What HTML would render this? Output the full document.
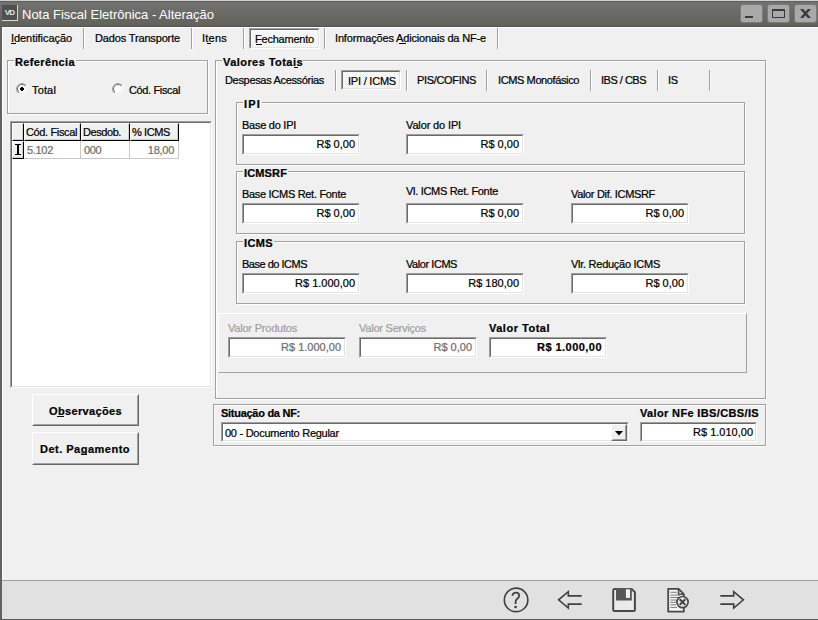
<!DOCTYPE html><html><head><meta charset="utf-8"><style>body{margin:0;width:818px;height:620px;overflow:hidden;background:#f0f0f0;position:relative;font-family:'Liberation Sans', sans-serif}u{text-decoration:none;border-bottom:1px solid currentColor;}</style></head><body>
<div style="position:absolute;left:0px;top:0px;width:818px;height:1px;background:#cfcfcf"></div>
<div style="position:absolute;left:0px;top:1px;width:818px;height:1px;background:#5e5e5c"></div>
<div style="position:absolute;left:0px;top:2px;width:818px;height:24px;background:linear-gradient(#72726e,#62625d)"></div>
<div style="position:absolute;left:0px;top:26px;width:818px;height:1px;background:#55554f"></div>
<div style="position:absolute;left:0px;top:27px;width:2px;height:593px;background:#626262"></div>
<div style="position:absolute;left:2px;top:27px;width:816px;height:1px;background:#fff"></div>
<div style="position:absolute;left:2px;top:27px;width:1px;height:553px;background:#fff"></div>
<div style="position:absolute;left:2px;top:580px;width:816px;height:1px;background:#a0a0a0"></div>
<div style="position:absolute;left:2px;top:581px;width:816px;height:38px;background:#e1e1e1"></div>
<div style="position:absolute;left:0px;top:619px;width:818px;height:1px;background:#5a5a5a"></div>
<div style="position:absolute;left:2px;top:5px;width:15px;height:15px;background:#505050"></div>
<div style="position:absolute;left:17px;top:5px;width:1px;height:16px;background:#d8d8d8"></div>
<div style="position:absolute;left:2px;top:20px;width:16px;height:1px;background:#d8d8d8"></div>
<div style="position:absolute;left:2px;top:8px;width:15px;text-align:center;font:bold 8px 'Liberation Sans';line-height:9px;color:#e8e8e8;letter-spacing:-0.8px">VD</div>
<div style="position:absolute;left:740px;top:4px;width:23px;height:19px;background:#a9a9a9;border:1px solid #7c7c78;border-radius:3px;box-sizing:border-box"></div>
<div style="position:absolute;left:767px;top:4px;width:23px;height:19px;background:#a9a9a9;border:1px solid #7c7c78;border-radius:3px;box-sizing:border-box"></div>
<div style="position:absolute;left:794px;top:4px;width:23px;height:19px;background:#a9a9a9;border:1px solid #7c7c78;border-radius:3px;box-sizing:border-box"></div>
<div style="position:absolute;left:745px;top:16px;width:8px;height:2px;background:#3a3a3a"></div>
<div style="position:absolute;left:772px;top:9px;width:13px;height:9px;border:1px solid #3a3a3a;border-top-width:2px;box-sizing:border-box"></div>
<svg style="position:absolute;left:799px;top:8px" width="13" height="11" viewBox="0 0 13 11"><path d="M1 1H4.2L12 10H8.8Z M8.8 1H12L4.2 10H1Z" fill="#3a3a3a"/></svg>
<div style="position:absolute;left:83px;top:28px;width:1px;height:21px;background:#a0a0a0"></div>
<div style="position:absolute;left:84px;top:28px;width:1px;height:21px;background:#fff"></div>
<div style="position:absolute;left:191px;top:28px;width:1px;height:21px;background:#a0a0a0"></div>
<div style="position:absolute;left:192px;top:28px;width:1px;height:21px;background:#fff"></div>
<div style="position:absolute;left:243px;top:28px;width:1px;height:21px;background:#a0a0a0"></div>
<div style="position:absolute;left:244px;top:28px;width:1px;height:21px;background:#fff"></div>
<div style="position:absolute;left:324px;top:28px;width:1px;height:21px;background:#a0a0a0"></div>
<div style="position:absolute;left:325px;top:28px;width:1px;height:21px;background:#fff"></div>
<div style="position:absolute;left:497px;top:28px;width:1px;height:21px;background:#a0a0a0"></div>
<div style="position:absolute;left:498px;top:28px;width:1px;height:21px;background:#fff"></div>
<div style="position:absolute;left:249px;top:28px;width:71px;height:21px;background:repeating-conic-gradient(#fff 0 25%,#f0f0f0 0 50%) 0 0/2px 2px;border-style:solid;border-width:1px;border-color:#a0a0a0 #fff #fff #a0a0a0;box-sizing:border-box"></div>
<div style="position:absolute;left:250px;top:29px;width:69px;height:19px;border-style:solid;border-width:1px;border-color:#696969 #e3e3e3 #e3e3e3 #696969;box-sizing:border-box"></div>
<div style="position:absolute;left:11px;top:43px;width:5px;height:1px;background:#000"></div>
<div style="position:absolute;left:207px;top:43px;width:4px;height:1px;background:#000"></div>
<div style="position:absolute;left:256px;top:44px;width:6px;height:1px;background:#000"></div>
<div style="position:absolute;left:399px;top:43px;width:7px;height:1px;background:#000"></div>
<div style="position:absolute;left:8px;top:61px;width:201px;height:54px;border:1px solid #fff;box-sizing:border-box"></div>
<div style="position:absolute;left:7px;top:60px;width:201px;height:54px;border:1px solid #a0a0a0;box-sizing:border-box"></div>
<div style="position:absolute;left:14px;top:56px;width:62px;height:10px;background:#f0f0f0"></div>
<svg style="position:absolute;left:16px;top:83px" width="12" height="12" viewBox="0 0 12 12">
<defs><linearGradient id="g1" x1="0" y1="0" x2="1" y2="1"><stop offset="0.5" stop-color="#a0a0a0"/><stop offset="0.5" stop-color="#fff"/></linearGradient>
<linearGradient id="g2" x1="0" y1="0" x2="1" y2="1"><stop offset="0.5" stop-color="#696969"/><stop offset="0.5" stop-color="#e3e3e3"/></linearGradient></defs>
<circle cx="6" cy="6" r="5.5" fill="none" stroke="url(#g1)" stroke-width="1"/>
<circle cx="6" cy="6" r="4.5" fill="#fff" stroke="url(#g2)" stroke-width="1"/>
<rect x="4" y="5" width="4" height="2" fill="#000"/><rect x="5" y="4" width="2" height="4" fill="#000"/>
</svg>
<svg style="position:absolute;left:112px;top:83px" width="12" height="12" viewBox="0 0 12 12">
<circle cx="6" cy="6" r="5.5" fill="none" stroke="url(#g1)" stroke-width="1"/>
<circle cx="6" cy="6" r="4.5" fill="#fff" stroke="url(#g2)" stroke-width="1"/>
</svg>
<div style="position:absolute;left:10px;top:121px;width:202px;height:267px;background:#fff;border-style:solid;border-width:1px;border-color:#a0a0a0 #fff #fff #a0a0a0;box-sizing:border-box"></div>
<div style="position:absolute;left:11px;top:122px;width:200px;height:265px;border-style:solid;border-width:1px;border-color:#696969 #e3e3e3 #e3e3e3 #696969;box-sizing:border-box"></div>
<div style="position:absolute;left:12px;top:123px;width:12px;height:18px;background:#f0f0f0;border-style:solid;border-width:1px;border-color:#fff #000 #000 #fff;box-sizing:border-box"></div>
<div style="position:absolute;left:13px;top:124px;width:10px;height:16px;border-right:1px solid #cfcfcf;border-bottom:1px solid #cfcfcf;box-sizing:border-box"></div>
<div style="position:absolute;left:24px;top:123px;width:57px;height:18px;background:#f0f0f0;border-style:solid;border-width:1px;border-color:#fff #000 #000 #fff;box-sizing:border-box"></div>
<div style="position:absolute;left:25px;top:124px;width:55px;height:16px;border-right:1px solid #cfcfcf;border-bottom:1px solid #cfcfcf;box-sizing:border-box"></div>
<div style="position:absolute;left:81px;top:123px;width:49px;height:18px;background:#f0f0f0;border-style:solid;border-width:1px;border-color:#fff #000 #000 #fff;box-sizing:border-box"></div>
<div style="position:absolute;left:82px;top:124px;width:47px;height:16px;border-right:1px solid #cfcfcf;border-bottom:1px solid #cfcfcf;box-sizing:border-box"></div>
<div style="position:absolute;left:130px;top:123px;width:49px;height:18px;background:#f0f0f0;border-style:solid;border-width:1px;border-color:#fff #000 #000 #fff;box-sizing:border-box"></div>
<div style="position:absolute;left:131px;top:124px;width:47px;height:16px;border-right:1px solid #cfcfcf;border-bottom:1px solid #cfcfcf;box-sizing:border-box"></div>
<div style="position:absolute;left:24px;top:141px;width:57px;height:18px;border-right:1px solid #c8c8c8;border-bottom:1px solid #c8c8c8;box-sizing:border-box"></div>
<div style="position:absolute;left:81px;top:141px;width:49px;height:18px;border-right:1px solid #c8c8c8;border-bottom:1px solid #c8c8c8;box-sizing:border-box"></div>
<div style="position:absolute;left:130px;top:141px;width:49px;height:18px;border-right:1px solid #c8c8c8;border-bottom:1px solid #c8c8c8;box-sizing:border-box"></div>
<div style="position:absolute;left:12px;top:141px;width:12px;height:18px;background:#f0f0f0;border-style:solid;border-width:1px;border-color:#fff #000 #000 #fff;box-sizing:border-box"></div>
<div style="position:absolute;left:13px;top:142px;width:10px;height:16px;border-right:1px solid #cfcfcf;border-bottom:1px solid #cfcfcf;box-sizing:border-box"></div>
<div style="position:absolute;left:15px;top:144px;width:6px;height:1px;background:#000"></div>
<div style="position:absolute;left:15px;top:154px;width:6px;height:1px;background:#000"></div>
<div style="position:absolute;left:17px;top:145px;width:2px;height:9px;background:#000"></div>
<div style="position:absolute;left:32px;top:394px;width:107px;height:32px;background:#f0f0f0;border-style:solid;border-width:1px;border-color:#fff #696969 #696969 #fff;box-sizing:border-box"></div>
<div style="position:absolute;left:33px;top:395px;width:105px;height:30px;border-style:solid;border-width:1px;border-color:#f0f0f0 #a0a0a0 #a0a0a0 #f0f0f0;box-sizing:border-box"></div>
<div style="position:absolute;left:57px;top:416px;width:7px;height:1px;background:#000"></div>
<div style="position:absolute;left:32px;top:432px;width:107px;height:33px;background:#f0f0f0;border-style:solid;border-width:1px;border-color:#fff #696969 #696969 #fff;box-sizing:border-box"></div>
<div style="position:absolute;left:33px;top:433px;width:105px;height:31px;border-style:solid;border-width:1px;border-color:#f0f0f0 #a0a0a0 #a0a0a0 #f0f0f0;box-sizing:border-box"></div>
<div style="position:absolute;left:81px;top:454px;width:6px;height:1px;background:#000"></div>
<div style="position:absolute;left:216px;top:61px;width:551px;height:339px;border:1px solid #fff;box-sizing:border-box"></div>
<div style="position:absolute;left:215px;top:60px;width:551px;height:339px;border:1px solid #a0a0a0;box-sizing:border-box"></div>
<div style="position:absolute;left:222px;top:56px;width:81px;height:10px;background:#f0f0f0"></div>
<div style="position:absolute;left:294px;top:67px;width:4px;height:1px;background:#000"></div>
<div style="position:absolute;left:335px;top:70px;width:1px;height:21px;background:#a0a0a0"></div>
<div style="position:absolute;left:336px;top:70px;width:1px;height:21px;background:#fff"></div>
<div style="position:absolute;left:406px;top:70px;width:1px;height:21px;background:#a0a0a0"></div>
<div style="position:absolute;left:407px;top:70px;width:1px;height:21px;background:#fff"></div>
<div style="position:absolute;left:486px;top:70px;width:1px;height:21px;background:#a0a0a0"></div>
<div style="position:absolute;left:487px;top:70px;width:1px;height:21px;background:#fff"></div>
<div style="position:absolute;left:590px;top:70px;width:1px;height:21px;background:#a0a0a0"></div>
<div style="position:absolute;left:591px;top:70px;width:1px;height:21px;background:#fff"></div>
<div style="position:absolute;left:657px;top:70px;width:1px;height:21px;background:#a0a0a0"></div>
<div style="position:absolute;left:658px;top:70px;width:1px;height:21px;background:#fff"></div>
<div style="position:absolute;left:709px;top:70px;width:1px;height:21px;background:#a0a0a0"></div>
<div style="position:absolute;left:710px;top:70px;width:1px;height:21px;background:#fff"></div>
<div style="position:absolute;left:341px;top:70px;width:60px;height:20px;background:repeating-conic-gradient(#fff 0 25%,#f0f0f0 0 50%) 0 0/2px 2px;border-style:solid;border-width:1px;border-color:#a0a0a0 #fff #fff #a0a0a0;box-sizing:border-box"></div>
<div style="position:absolute;left:342px;top:71px;width:58px;height:18px;border-style:solid;border-width:1px;border-color:#696969 #e3e3e3 #e3e3e3 #696969;box-sizing:border-box"></div>
<div style="position:absolute;left:237px;top:103px;width:509px;height:63px;border:1px solid #fff;box-sizing:border-box"></div>
<div style="position:absolute;left:236px;top:102px;width:509px;height:63px;border:1px solid #a0a0a0;box-sizing:border-box"></div>
<div style="position:absolute;left:243px;top:98px;width:19px;height:10px;background:#f0f0f0"></div>
<div style="position:absolute;left:242px;top:134px;width:118px;height:21px;background:#fff;border-style:solid;border-width:1px;border-color:#a0a0a0 #fff #fff #a0a0a0;box-sizing:border-box"></div>
<div style="position:absolute;left:243px;top:135px;width:116px;height:19px;border-style:solid;border-width:1px;border-color:#696969 #e3e3e3 #e3e3e3 #696969;box-sizing:border-box"></div>
<div style="position:absolute;left:406px;top:134px;width:118px;height:21px;background:#fff;border-style:solid;border-width:1px;border-color:#a0a0a0 #fff #fff #a0a0a0;box-sizing:border-box"></div>
<div style="position:absolute;left:407px;top:135px;width:116px;height:19px;border-style:solid;border-width:1px;border-color:#696969 #e3e3e3 #e3e3e3 #696969;box-sizing:border-box"></div>
<div style="position:absolute;left:237px;top:172px;width:509px;height:63px;border:1px solid #fff;box-sizing:border-box"></div>
<div style="position:absolute;left:236px;top:171px;width:509px;height:63px;border:1px solid #a0a0a0;box-sizing:border-box"></div>
<div style="position:absolute;left:243px;top:167px;width:45px;height:10px;background:#f0f0f0"></div>
<div style="position:absolute;left:242px;top:203px;width:118px;height:21px;background:#fff;border-style:solid;border-width:1px;border-color:#a0a0a0 #fff #fff #a0a0a0;box-sizing:border-box"></div>
<div style="position:absolute;left:243px;top:204px;width:116px;height:19px;border-style:solid;border-width:1px;border-color:#696969 #e3e3e3 #e3e3e3 #696969;box-sizing:border-box"></div>
<div style="position:absolute;left:406px;top:203px;width:118px;height:21px;background:#fff;border-style:solid;border-width:1px;border-color:#a0a0a0 #fff #fff #a0a0a0;box-sizing:border-box"></div>
<div style="position:absolute;left:407px;top:204px;width:116px;height:19px;border-style:solid;border-width:1px;border-color:#696969 #e3e3e3 #e3e3e3 #696969;box-sizing:border-box"></div>
<div style="position:absolute;left:571px;top:203px;width:118px;height:21px;background:#fff;border-style:solid;border-width:1px;border-color:#a0a0a0 #fff #fff #a0a0a0;box-sizing:border-box"></div>
<div style="position:absolute;left:572px;top:204px;width:116px;height:19px;border-style:solid;border-width:1px;border-color:#696969 #e3e3e3 #e3e3e3 #696969;box-sizing:border-box"></div>
<div style="position:absolute;left:237px;top:242px;width:509px;height:63px;border:1px solid #fff;box-sizing:border-box"></div>
<div style="position:absolute;left:236px;top:241px;width:509px;height:63px;border:1px solid #a0a0a0;box-sizing:border-box"></div>
<div style="position:absolute;left:243px;top:237px;width:31px;height:10px;background:#f0f0f0"></div>
<div style="position:absolute;left:242px;top:273px;width:118px;height:21px;background:#fff;border-style:solid;border-width:1px;border-color:#a0a0a0 #fff #fff #a0a0a0;box-sizing:border-box"></div>
<div style="position:absolute;left:243px;top:274px;width:116px;height:19px;border-style:solid;border-width:1px;border-color:#696969 #e3e3e3 #e3e3e3 #696969;box-sizing:border-box"></div>
<div style="position:absolute;left:406px;top:273px;width:118px;height:21px;background:#fff;border-style:solid;border-width:1px;border-color:#a0a0a0 #fff #fff #a0a0a0;box-sizing:border-box"></div>
<div style="position:absolute;left:407px;top:274px;width:116px;height:19px;border-style:solid;border-width:1px;border-color:#696969 #e3e3e3 #e3e3e3 #696969;box-sizing:border-box"></div>
<div style="position:absolute;left:571px;top:273px;width:118px;height:21px;background:#fff;border-style:solid;border-width:1px;border-color:#a0a0a0 #fff #fff #a0a0a0;box-sizing:border-box"></div>
<div style="position:absolute;left:572px;top:274px;width:116px;height:19px;border-style:solid;border-width:1px;border-color:#696969 #e3e3e3 #e3e3e3 #696969;box-sizing:border-box"></div>
<div style="position:absolute;left:218px;top:313px;width:529px;height:60px;border-style:solid;border-width:1px;border-color:#fff #a0a0a0 #a0a0a0 #fff;box-sizing:border-box"></div>
<div style="position:absolute;left:228px;top:337px;width:118px;height:21px;background:#fff;border-style:solid;border-width:1px;border-color:#a0a0a0 #fff #fff #a0a0a0;box-sizing:border-box"></div>
<div style="position:absolute;left:229px;top:338px;width:116px;height:19px;border-style:solid;border-width:1px;border-color:#696969 #e3e3e3 #e3e3e3 #696969;box-sizing:border-box"></div>
<div style="position:absolute;left:359px;top:337px;width:118px;height:21px;background:#fff;border-style:solid;border-width:1px;border-color:#a0a0a0 #fff #fff #a0a0a0;box-sizing:border-box"></div>
<div style="position:absolute;left:360px;top:338px;width:116px;height:19px;border-style:solid;border-width:1px;border-color:#696969 #e3e3e3 #e3e3e3 #696969;box-sizing:border-box"></div>
<div style="position:absolute;left:489px;top:337px;width:118px;height:21px;background:#fff;border-style:solid;border-width:1px;border-color:#a0a0a0 #fff #fff #a0a0a0;box-sizing:border-box"></div>
<div style="position:absolute;left:490px;top:338px;width:116px;height:19px;border-style:solid;border-width:1px;border-color:#696969 #e3e3e3 #e3e3e3 #696969;box-sizing:border-box"></div>
<div style="position:absolute;left:214px;top:405px;width:553px;height:42px;border:1px solid #fff;box-sizing:border-box"></div>
<div style="position:absolute;left:213px;top:404px;width:553px;height:42px;border:1px solid #a0a0a0;box-sizing:border-box"></div>
<div style="position:absolute;left:221px;top:422px;width:408px;height:20px;background:#fff;border-style:solid;border-width:1px;border-color:#a0a0a0 #fff #fff #a0a0a0;box-sizing:border-box"></div>
<div style="position:absolute;left:222px;top:423px;width:406px;height:18px;border-style:solid;border-width:1px;border-color:#696969 #e3e3e3 #e3e3e3 #696969;box-sizing:border-box"></div>
<div style="position:absolute;left:611px;top:424px;width:16px;height:17px;background:#f0f0f0;border-style:solid;border-width:1px;border-color:#fff #696969 #696969 #fff;box-sizing:border-box"></div>
<div style="position:absolute;left:612px;top:425px;width:14px;height:15px;border-style:solid;border-width:1px;border-color:#f0f0f0 #a0a0a0 #a0a0a0 #f0f0f0;box-sizing:border-box"></div>
<svg style="position:absolute;left:615px;top:431px" width="8" height="5" viewBox="0 0 8 5"><path d="M0 0H8L4 4.5Z" fill="#000"/></svg>
<div style="position:absolute;left:640px;top:422px;width:117px;height:20px;background:#fff;border-style:solid;border-width:1px;border-color:#a0a0a0 #fff #fff #a0a0a0;box-sizing:border-box"></div>
<div style="position:absolute;left:641px;top:423px;width:115px;height:18px;border-style:solid;border-width:1px;border-color:#696969 #e3e3e3 #e3e3e3 #696969;box-sizing:border-box"></div>
<div id="t0" style="position:absolute;top:7px;font-family:'Liberation Sans', sans-serif;font-size:13px;line-height:15px;white-space:nowrap;color:#fff;left:22px;letter-spacing:-0.006px;">Nota Fiscal Eletrônica - Alteração</div>
<div id="t1" style="position:absolute;top:32px;font-family:'Liberation Sans', sans-serif;font-size:11px;line-height:13px;white-space:nowrap;color:#000;-webkit-text-stroke:0.22px #000;left:11px;letter-spacing:-0.059px;">Identificação</div>
<div id="t2" style="position:absolute;top:32px;font-family:'Liberation Sans', sans-serif;font-size:11px;line-height:13px;white-space:nowrap;color:#000;-webkit-text-stroke:0.22px #000;left:95px;letter-spacing:-0.152px;">Dados Transporte</div>
<div id="t3" style="position:absolute;top:32px;font-family:'Liberation Sans', sans-serif;font-size:11px;line-height:13px;white-space:nowrap;color:#000;-webkit-text-stroke:0.22px #000;left:202px;letter-spacing:0.228px;">Itens</div>
<div id="t4" style="position:absolute;top:33px;font-family:'Liberation Sans', sans-serif;font-size:11px;line-height:13px;white-space:nowrap;color:#000;-webkit-text-stroke:0.22px #000;left:255px;letter-spacing:-0.216px;">Fechamento</div>
<div id="t5" style="position:absolute;top:32px;font-family:'Liberation Sans', sans-serif;font-size:11px;line-height:13px;white-space:nowrap;color:#000;-webkit-text-stroke:0.22px #000;left:335px;letter-spacing:-0.164px;">Informações Adicionais da NF-e</div>
<div id="t6" style="position:absolute;top:56px;font-family:'Liberation Sans', sans-serif;font-size:11px;line-height:13px;white-space:nowrap;color:#000;font-weight:bold;-webkit-text-stroke:0.22px #000;left:15px;letter-spacing:0.373px;">Referência</div>
<div id="t7" style="position:absolute;top:84px;font-family:'Liberation Sans', sans-serif;font-size:11px;line-height:13px;white-space:nowrap;color:#000;-webkit-text-stroke:0.22px #000;left:32px;letter-spacing:0.150px;">Total</div>
<div id="t8" style="position:absolute;top:84px;font-family:'Liberation Sans', sans-serif;font-size:11px;line-height:13px;white-space:nowrap;color:#000;-webkit-text-stroke:0.22px #000;left:129px;letter-spacing:-0.366px;">Cód. Fiscal</div>
<div id="t9" style="position:absolute;top:126px;font-family:'Liberation Sans', sans-serif;font-size:11px;line-height:13px;white-space:nowrap;color:#000;-webkit-text-stroke:0.22px #000;left:26px;letter-spacing:-0.366px;">Cód. Fiscal</div>
<div id="t10" style="position:absolute;top:126px;font-family:'Liberation Sans', sans-serif;font-size:11px;line-height:13px;white-space:nowrap;color:#000;-webkit-text-stroke:0.22px #000;left:83px;letter-spacing:-0.426px;">Desdob.</div>
<div id="t11" style="position:absolute;top:126px;font-family:'Liberation Sans', sans-serif;font-size:11px;line-height:13px;white-space:nowrap;color:#000;-webkit-text-stroke:0.22px #000;left:132px;letter-spacing:-0.391px;">% ICMS</div>
<div id="t12" style="position:absolute;top:144px;font-family:'Liberation Sans', sans-serif;font-size:11px;line-height:13px;white-space:nowrap;color:#6d6d6d;-webkit-text-stroke:0.22px #6d6d6d;left:27px;letter-spacing:-0.306px;">5.102</div>
<div id="t13" style="position:absolute;top:144px;font-family:'Liberation Sans', sans-serif;font-size:11px;line-height:13px;white-space:nowrap;color:#6d6d6d;-webkit-text-stroke:0.22px #6d6d6d;left:84px;letter-spacing:-0.306px;">000</div>
<div id="t14" style="position:absolute;top:144px;font-family:'Liberation Sans', sans-serif;font-size:11px;line-height:13px;white-space:nowrap;color:#6d6d6d;-webkit-text-stroke:0.22px #6d6d6d;right:644px;letter-spacing:-0.275px;">18,00</div>
<div id="t15" style="position:absolute;top:405px;font-family:'Liberation Sans', sans-serif;font-size:11px;line-height:13px;white-space:nowrap;color:#000;font-weight:bold;-webkit-text-stroke:0.22px #000;left:49px;letter-spacing:0.354px;">Observações</div>
<div id="t16" style="position:absolute;top:443px;font-family:'Liberation Sans', sans-serif;font-size:11px;line-height:13px;white-space:nowrap;color:#000;font-weight:bold;-webkit-text-stroke:0.22px #000;left:40px;letter-spacing:0.490px;">Det. Pagamento</div>
<div id="t17" style="position:absolute;top:56px;font-family:'Liberation Sans', sans-serif;font-size:11px;line-height:13px;white-space:nowrap;color:#000;font-weight:bold;-webkit-text-stroke:0.22px #000;left:223px;letter-spacing:0.444px;">Valores Totais</div>
<div id="t18" style="position:absolute;top:74px;font-family:'Liberation Sans', sans-serif;font-size:11px;line-height:13px;white-space:nowrap;color:#000;-webkit-text-stroke:0.22px #000;left:225px;letter-spacing:-0.325px;">Despesas Acessórias</div>
<div id="t19" style="position:absolute;top:75px;font-family:'Liberation Sans', sans-serif;font-size:11px;line-height:13px;white-space:nowrap;color:#000;-webkit-text-stroke:0.22px #000;left:348px;letter-spacing:-0.212px;">IPI / ICMS</div>
<div id="t20" style="position:absolute;top:74px;font-family:'Liberation Sans', sans-serif;font-size:11px;line-height:13px;white-space:nowrap;color:#000;-webkit-text-stroke:0.22px #000;left:417px;letter-spacing:-0.334px;">PIS/COFINS</div>
<div id="t21" style="position:absolute;top:74px;font-family:'Liberation Sans', sans-serif;font-size:11px;line-height:13px;white-space:nowrap;color:#000;-webkit-text-stroke:0.22px #000;left:498px;letter-spacing:-0.388px;">ICMS Monofásico</div>
<div id="t22" style="position:absolute;top:74px;font-family:'Liberation Sans', sans-serif;font-size:11px;line-height:13px;white-space:nowrap;color:#000;-webkit-text-stroke:0.22px #000;left:601px;letter-spacing:-0.503px;">IBS / CBS</div>
<div id="t23" style="position:absolute;top:74px;font-family:'Liberation Sans', sans-serif;font-size:11px;line-height:13px;white-space:nowrap;color:#000;-webkit-text-stroke:0.22px #000;left:668px;letter-spacing:-0.203px;">IS</div>
<div id="t24" style="position:absolute;top:98px;font-family:'Liberation Sans', sans-serif;font-size:11px;line-height:13px;white-space:nowrap;color:#000;font-weight:bold;-webkit-text-stroke:0.22px #000;left:244px;letter-spacing:1.182px;">IPI</div>
<div id="t25" style="position:absolute;top:119px;font-family:'Liberation Sans', sans-serif;font-size:11px;line-height:13px;white-space:nowrap;color:#000;-webkit-text-stroke:0.22px #000;left:242px;letter-spacing:-0.261px;">Base do IPI</div>
<div id="t26" style="position:absolute;top:138px;font-family:'Liberation Sans', sans-serif;font-size:11px;line-height:13px;white-space:nowrap;color:#000;-webkit-text-stroke:0.22px #000;right:463px;">R$ 0,00</div>
<div id="t27" style="position:absolute;top:119px;font-family:'Liberation Sans', sans-serif;font-size:11px;line-height:13px;white-space:nowrap;color:#000;-webkit-text-stroke:0.22px #000;left:406px;letter-spacing:-0.139px;">Valor do IPI</div>
<div id="t28" style="position:absolute;top:138px;font-family:'Liberation Sans', sans-serif;font-size:11px;line-height:13px;white-space:nowrap;color:#000;-webkit-text-stroke:0.22px #000;right:299px;">R$ 0,00</div>
<div id="t29" style="position:absolute;top:167px;font-family:'Liberation Sans', sans-serif;font-size:11px;line-height:13px;white-space:nowrap;color:#000;font-weight:bold;-webkit-text-stroke:0.22px #000;left:244px;letter-spacing:0.138px;">ICMSRF</div>
<div id="t30" style="position:absolute;top:188px;font-family:'Liberation Sans', sans-serif;font-size:11px;line-height:13px;white-space:nowrap;color:#000;-webkit-text-stroke:0.22px #000;left:242px;letter-spacing:-0.302px;">Base ICMS Ret. Fonte</div>
<div id="t31" style="position:absolute;top:207px;font-family:'Liberation Sans', sans-serif;font-size:11px;line-height:13px;white-space:nowrap;color:#000;-webkit-text-stroke:0.22px #000;right:463px;">R$ 0,00</div>
<div id="t32" style="position:absolute;top:185px;font-family:'Liberation Sans', sans-serif;font-size:11px;line-height:13px;white-space:nowrap;color:#000;-webkit-text-stroke:0.22px #000;left:406px;letter-spacing:-0.306px;">Vl. ICMS Ret. Fonte</div>
<div id="t33" style="position:absolute;top:207px;font-family:'Liberation Sans', sans-serif;font-size:11px;line-height:13px;white-space:nowrap;color:#000;-webkit-text-stroke:0.22px #000;right:299px;">R$ 0,00</div>
<div id="t34" style="position:absolute;top:188px;font-family:'Liberation Sans', sans-serif;font-size:11px;line-height:13px;white-space:nowrap;color:#000;-webkit-text-stroke:0.22px #000;left:571px;letter-spacing:-0.332px;">Valor Dif. ICMSRF</div>
<div id="t35" style="position:absolute;top:207px;font-family:'Liberation Sans', sans-serif;font-size:11px;line-height:13px;white-space:nowrap;color:#000;-webkit-text-stroke:0.22px #000;right:134px;">R$ 0,00</div>
<div id="t36" style="position:absolute;top:237px;font-family:'Liberation Sans', sans-serif;font-size:11px;line-height:13px;white-space:nowrap;color:#000;font-weight:bold;-webkit-text-stroke:0.22px #000;left:244px;letter-spacing:0.375px;">ICMS</div>
<div id="t37" style="position:absolute;top:258px;font-family:'Liberation Sans', sans-serif;font-size:11px;line-height:13px;white-space:nowrap;color:#000;-webkit-text-stroke:0.22px #000;left:242px;letter-spacing:-0.493px;">Base do ICMS</div>
<div id="t38" style="position:absolute;top:277px;font-family:'Liberation Sans', sans-serif;font-size:11px;line-height:13px;white-space:nowrap;color:#000;-webkit-text-stroke:0.22px #000;right:463px;">R$ 1.000,00</div>
<div id="t39" style="position:absolute;top:258px;font-family:'Liberation Sans', sans-serif;font-size:11px;line-height:13px;white-space:nowrap;color:#000;-webkit-text-stroke:0.22px #000;left:406px;letter-spacing:-0.442px;">Valor ICMS</div>
<div id="t40" style="position:absolute;top:277px;font-family:'Liberation Sans', sans-serif;font-size:11px;line-height:13px;white-space:nowrap;color:#000;-webkit-text-stroke:0.22px #000;right:299px;">R$ 180,00</div>
<div id="t41" style="position:absolute;top:258px;font-family:'Liberation Sans', sans-serif;font-size:11px;line-height:13px;white-space:nowrap;color:#000;-webkit-text-stroke:0.22px #000;left:571px;letter-spacing:-0.267px;">Vlr. Redução ICMS</div>
<div id="t42" style="position:absolute;top:277px;font-family:'Liberation Sans', sans-serif;font-size:11px;line-height:13px;white-space:nowrap;color:#000;-webkit-text-stroke:0.22px #000;right:134px;">R$ 0,00</div>
<div id="t43" style="position:absolute;top:322px;font-family:'Liberation Sans', sans-serif;font-size:11px;line-height:13px;white-space:nowrap;color:#a0a0a0;-webkit-text-stroke:0.22px #a0a0a0;left:228px;letter-spacing:-0.211px;">Valor Produtos</div>
<div id="t44" style="position:absolute;top:341px;font-family:'Liberation Sans', sans-serif;font-size:11px;line-height:13px;white-space:nowrap;color:#6d6d6d;-webkit-text-stroke:0.22px #6d6d6d;right:477px;">R$ 1.000,00</div>
<div id="t45" style="position:absolute;top:322px;font-family:'Liberation Sans', sans-serif;font-size:11px;line-height:13px;white-space:nowrap;color:#a0a0a0;-webkit-text-stroke:0.22px #a0a0a0;left:359px;letter-spacing:-0.222px;">Valor Serviços</div>
<div id="t46" style="position:absolute;top:341px;font-family:'Liberation Sans', sans-serif;font-size:11px;line-height:13px;white-space:nowrap;color:#6d6d6d;-webkit-text-stroke:0.22px #6d6d6d;right:346px;">R$ 0,00</div>
<div id="t47" style="position:absolute;top:322px;font-family:'Liberation Sans', sans-serif;font-size:11px;line-height:13px;white-space:nowrap;color:#000;font-weight:bold;-webkit-text-stroke:0.22px #000;left:489px;letter-spacing:0.507px;">Valor Total</div>
<div id="t48" style="position:absolute;top:341px;font-family:'Liberation Sans', sans-serif;font-size:11px;line-height:13px;white-space:nowrap;color:#000;font-weight:bold;-webkit-text-stroke:0.22px #000;right:216px;letter-spacing:0.460px;">R$ 1.000,00</div>
<div id="t49" style="position:absolute;top:407px;font-family:'Liberation Sans', sans-serif;font-size:11px;line-height:13px;white-space:nowrap;color:#000;font-weight:bold;-webkit-text-stroke:0.22px #000;left:221px;letter-spacing:-0.275px;">Situação da NF:</div>
<div id="t50" style="position:absolute;top:427px;font-family:'Liberation Sans', sans-serif;font-size:11px;line-height:13px;white-space:nowrap;color:#000;-webkit-text-stroke:0.22px #000;left:225px;letter-spacing:-0.272px;">00 - Documento Regular</div>
<div id="t51" style="position:absolute;top:407px;font-family:'Liberation Sans', sans-serif;font-size:11px;line-height:13px;white-space:nowrap;color:#000;font-weight:bold;-webkit-text-stroke:0.22px #000;left:640px;letter-spacing:0.356px;">Valor NFe IBS/CBS/IS</div>
<div id="t52" style="position:absolute;top:426px;font-family:'Liberation Sans', sans-serif;font-size:11px;line-height:13px;white-space:nowrap;color:#000;-webkit-text-stroke:0.22px #000;right:65px;">R$ 1.010,00</div>

<svg style="position:absolute;left:500px;top:585px" width="260" height="32" viewBox="0 0 260 32">
 <g fill="none" stroke="#404040" stroke-width="1.6" stroke-linejoin="miter">
  <circle cx="16.1" cy="14.9" r="11.75"/>
  <path d="M12.5 10.8 C12.5 8.8 14 7.6 15.9 7.6 C17.8 7.6 19.2 8.9 19.2 10.6 C19.2 12.4 17.9 13.2 16.8 14.2 C15.9 15 15.6 16 15.6 17.2 V18.9" stroke-width="1.8"/>
  <path d="M81.7 10.9 H68.3 V6.7 L58.6 14.85 L68.3 23 V19.1 H81.7"/>
  <path d="M220.3 10.9 H233.7 V6.7 L243.4 14.85 L233.7 23 V19.1 H220.3"/>
 </g>
 <circle cx="15.6" cy="22" r="1.35" fill="#404040"/>
 <!-- floppy -->
 <path d="M114.7 3.9 H131.6 L134.9 7.2 V24.4 Q134.9 25.9 133.4 25.9 H114.7 Q113.2 25.9 113.2 24.4 V5.4 Q113.2 3.9 114.7 3.9 Z" fill="#eaeaea" stroke="#484848" stroke-width="2"/>
 <rect x="116" y="3" width="15.8" height="12.5" fill="#565656"/>
 <rect x="125.9" y="4.3" width="4.1" height="8.6" fill="#f0f0f0"/>
 <!-- doc x -->
 <path d="M168.2 3.9 H178.6 L183.8 9.2 V26.6 H168.2 Z" fill="#f4f4f4" stroke="#484848" stroke-width="1.8" stroke-linejoin="round"/>
 <path d="M178.6 3.9 V9.2 H183.8" fill="none" stroke="#484848" stroke-width="1.6"/>
 <g stroke="#7a7a7a" stroke-width="1">
  <path d="M170.3 7.3 H177 M170.3 10.1 H180 M170.3 12.5 H181 M170.3 15 H176 M170.3 17.3 H176 M170.3 19.8 H176 M170.3 22.4 H177"/>
 </g>
 <circle cx="182.5" cy="17.1" r="5.6" fill="#e6e6e6" stroke="#484848" stroke-width="1.7"/>
 <path d="M179.7 14.2 L185.3 19.9 M185.3 14.2 L179.7 19.9" stroke="#404040" stroke-width="2"/>
</svg>

</body></html>
